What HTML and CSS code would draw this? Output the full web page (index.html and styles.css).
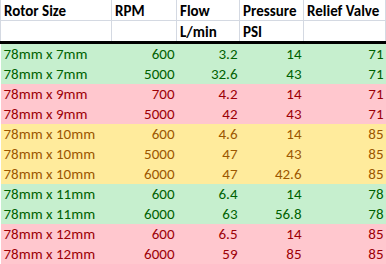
FILE: index.html
```html
<!DOCTYPE html>
<html>
<head>
<meta charset="utf-8">
<link rel="stylesheet" href="styles.css">
</head>
<body>
<table class="sheet">
  <colgroup>
    <col class="c1"><col class="c2"><col class="c3"><col class="c4"><col class="c5">
  </colgroup>
  <thead>
    <tr class="h1"><th>Rotor Size</th><th>RPM</th><th>Flow</th><th>Pressure</th><th>Relief Valve</th></tr>
    <tr class="h2"><th></th><th></th><th>L/min</th><th>PSI</th><th></th></tr>
  </thead>
  <tbody>
    <tr class="good"><td>78mm x 7mm</td><td>600</td><td>3.2</td><td>14</td><td>71</td></tr>
    <tr class="good"><td>78mm x 7mm</td><td>5000</td><td>32.6</td><td>43</td><td>71</td></tr>
    <tr class="bad"><td>78mm x 9mm</td><td>700</td><td>4.2</td><td>14</td><td>71</td></tr>
    <tr class="bad"><td>78mm x 9mm</td><td>5000</td><td>42</td><td>43</td><td>71</td></tr>
    <tr class="neutral"><td>78mm x 10mm</td><td>600</td><td>4.6</td><td>14</td><td>85</td></tr>
    <tr class="neutral"><td>78mm x 10mm</td><td>5000</td><td>47</td><td>43</td><td>85</td></tr>
    <tr class="neutral"><td>78mm x 10mm</td><td>6000</td><td>47</td><td>42.6</td><td>85</td></tr>
    <tr class="good"><td>78mm x 11mm</td><td>600</td><td>6.4</td><td>14</td><td>78</td></tr>
    <tr class="good"><td>78mm x 11mm</td><td>6000</td><td>63</td><td>56.8</td><td>78</td></tr>
    <tr class="bad"><td>78mm x 12mm</td><td>600</td><td>6.5</td><td>14</td><td>85</td></tr>
    <tr class="bad"><td>78mm x 12mm</td><td>6000</td><td>59</td><td>85</td><td>85</td></tr>
  </tbody>
</table>
</body>
</html>
```
FILE: styles.css
```css
html, body {
  margin: 0;
  padding: 0;
  background: #ffffff;
}
.sheet {
  border-collapse: collapse;
  table-layout: fixed;
  width: 385px;
  font-family: Carlito, Lato, "Liberation Sans", sans-serif;
  font-size: 15px;
  color: #000;
}
.c1 { width: 111px; }
.c2 { width: 65px; }
.c3 { width: 63px; }
.c4 { width: 64px; }
.c5 { width: 82px; }
.sheet th {
  font-weight: bold;
  text-align: left;
  vertical-align: bottom;
  padding: 0 2px 0 3px;
  border: 1px solid #d4d9e2;
  border-top: none;
  white-space: nowrap;
  overflow: hidden;
  line-height: 18px;
}
.h1 th { height: 20px; }
.h2 th {
  height: 20px;
  border-bottom: 3px solid #000;
}
.sheet td {
  height: 20px;
  padding: 0 2px 0 3px;
  line-height: 20px;
  text-align: right;
  white-space: nowrap;
  overflow: hidden;
  border: none;
}
.sheet td:first-child { text-align: left; }
.good td { background: #c6efce; color: #006100; }
.bad td { background: #ffc7ce; color: #9c0006; }
.neutral td { background: #ffeb9c; color: #9c5700; }
```
